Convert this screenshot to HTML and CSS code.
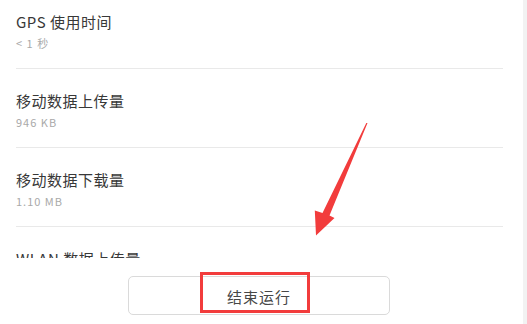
FILE: index.html
```html
<!DOCTYPE html>
<html lang="zh-CN">
<head>
<meta charset="utf-8">
<title>使用详情</title>
<link rel="stylesheet" href="styles.css">
</head>
<body>
<div class="screen">
  <div class="main">
    <div class="list">
      <div class="items">
        <div class="row">
          <div class="title">GPS 使用时间</div>
          <div class="sub">&lt; 1 秒</div>
        </div>
        <div class="row">
          <div class="title">移动数据上传量</div>
          <div class="sub">946 KB</div>
        </div>
        <div class="row">
          <div class="title">移动数据下载量</div>
          <div class="sub">1.10 MB</div>
        </div>
        <div class="row">
          <div class="title">WLAN 数据上传量</div>
          <div class="sub">2.31 MB</div>
        </div>
      </div>
    </div>
    <div class="footer">
      <button class="end-btn" type="button">结束运行</button>
    </div>
  </div>
  <div class="scroll-strip"></div>

  <svg class="arrow" width="527" height="324" viewBox="0 0 527 324" aria-hidden="true">
    <polygon points="367.5,123 329.5,215.5 334.5,218 316,235.5 314.8,210.5 322.5,213 366.3,123" fill="#f23c3c"/>
  </svg>
  <div class="highlight"></div>
</div>
</body>
</html>
```

FILE: styles.css
```css
* { box-sizing: border-box; }

html, body {
  margin: 0;
  padding: 0;
  background: #ffffff;
}

body {
  font-family: "Noto Sans CJK SC", "Noto Sans", "Liberation Sans", sans-serif;
  color: #333333;
}

.screen {
  position: relative;
  width: 527px;
  height: 324px;
  display: flex;
  overflow: hidden;
  background: #ffffff;
}

.main {
  flex: 1;
  display: flex;
  flex-direction: column;
  min-width: 0;
}

.list {
  height: 258px;
  overflow: hidden;
}

.items {
  margin-top: -10px;
}

.row {
  margin: 0 20px 0 16px;
  padding: 23px 0 18px;
  border-bottom: 1px solid #e9e9e9;
  display: flex;
  flex-direction: column;
  gap: 5px;
}

.title {
  font-size: 15px;
  line-height: 18px;
  letter-spacing: 0.5px;
  color: #383838;
}

.sub {
  font-size: 11px;
  line-height: 14px;
  letter-spacing: 1px;
  color: #a9a9a9;
}

.footer {
  height: 66px;
  padding: 18px 0 0 128px;
  background: #ffffff;
}

.end-btn {
  width: 262px;
  height: 39px;
  border: 1px solid #dadada;
  border-radius: 5px;
  background: #ffffff;
  font-family: "Noto Sans CJK SC", "Noto Sans", sans-serif;
  font-size: 15px;
  letter-spacing: 1px;
  color: #474747;
  padding: 2px 0 0;
}

.scroll-strip {
  width: 4px;
  background: #f2f2f2;
}

.arrow {
  position: absolute;
  left: 0;
  top: 0;
  pointer-events: none;
}

.highlight {
  position: absolute;
  left: 200px;
  top: 272px;
  width: 110px;
  height: 41px;
  border: 3px solid #f23c3c;
  pointer-events: none;
}
```
